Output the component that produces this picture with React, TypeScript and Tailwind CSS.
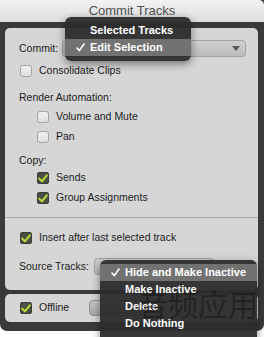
const font = "font-['Liberation_Sans',Arial,sans-serif]"

const CheckBox = ({ checked }: { checked?: boolean }) =>
	checked ? (
		<span className="flex h-[12px] w-[12px] shrink-0 items-center justify-center rounded-[3px] bg-[#4b4f44] shadow-[inset_0_0_0_1px_#3a3d35]">
			<svg width="10" height="9" viewBox="0 0 10 9" aria-hidden="true">
				<path d="M1.2 4.6 L3.9 7.3 L8.8 1.3" fill="none" stroke="#b5e03c" strokeWidth="2" strokeLinecap="round" strokeLinejoin="round" />
			</svg>
		</span>
	) : (
		<span className="h-[12px] w-[12px] shrink-0 rounded-[3px] border border-[#a3a3a3] bg-gradient-to-b from-[#f0f0f0] to-[#e0e0e0]" />
	)

const Row = ({ children, className = "" }: { children: React.ReactNode; className?: string }) => (
	<div className={`flex h-4 items-center whitespace-nowrap ${className}`}>{children}</div>
)

const Check = () => (
	<svg width="9" height="9" viewBox="0 0 9 9" aria-hidden="true">
		<path d="M1 5 L3.4 7.6 L8 1" fill="none" stroke="white" strokeWidth="1.6" strokeLinecap="round" strokeLinejoin="round" />
	</svg>
)

const MenuItem = ({ label, active }: { label: string; active?: boolean }) => (
	<div className={`relative flex h-[17px] items-center whitespace-nowrap pl-[25px] ${active ? "bg-[#727272]" : ""}`}>
		{active && (
			<span className="absolute left-[11px] top-[4px]">
				<Check />
			</span>
		)}
		<span className="text-[11px] font-bold text-white">{label}</span>
	</div>
)

export default function App() {
	return (
		<div className={`relative h-[337px] w-[264px] overflow-hidden bg-white text-[10.5px] text-[#1c1c1c] ${font}`}>
			<div className="flex h-[331px] flex-col rounded-b-[7px] bg-[#3a3a3a]">
				{/* title bar */}
				<div className="flex h-[22px] items-center justify-center rounded-tr-[5px] bg-gradient-to-b from-[#f2f2f2] to-[#dcdcdc] text-[13px] text-[#505050]">
					Commit Tracks
				</div>

				{/* main panel */}
				<div className="ml-[5px] mr-[6px] mt-[6px] flex h-[262px] flex-col rounded-[5px] bg-[#d6d6d6] pt-[12px]">
					<div className="flex h-[17px] items-center whitespace-nowrap pl-[14px]">
						<span>Commit:</span>
						<div className="relative ml-[4px] h-[17px] w-[184px] rounded-[4px] border border-[#a2a2a2] bg-gradient-to-b from-[#d0d0d0] to-[#bcbcbc]">
							<span className="absolute right-[5px] top-[5px] h-0 w-0 border-x-[4px] border-t-[5px] border-x-transparent border-t-[#5a5a5a]" />
						</div>
					</div>

					<Row className="mt-[6px] gap-[7px] pl-[15px]">
						<CheckBox />
						<span>Consolidate Clips</span>
					</Row>

					<Row className="mt-[11px] pl-[14px]">Render Automation:</Row>

					<Row className="mt-[3px] gap-[7px] pl-[32px]">
						<CheckBox />
						<span>Volume and Mute</span>
					</Row>
					<Row className="mt-[4px] gap-[7px] pl-[32px]">
						<CheckBox />
						<span>Pan</span>
					</Row>

					<Row className="mt-[8px] pl-[14px]">Copy:</Row>
					<Row className="mt-[1px] gap-[7px] pl-[32px]">
						<CheckBox checked />
						<span>Sends</span>
					</Row>
					<Row className="mt-[4px] gap-[7px] pl-[32px]">
						<CheckBox checked />
						<span>Group Assignments</span>
					</Row>

					<div className="mt-[11px] h-px bg-[#a9a9a9]" />

					<Row className="mt-[12px] gap-[7px] pl-[15px]">
						<CheckBox checked />
						<span>Insert after last selected track</span>
					</Row>

					<div className="mt-[12px] flex h-[17px] items-center whitespace-nowrap pl-[14px]">
						<span>Source Tracks:</span>
						<div className="ml-[5px] h-[17px] w-[120px] rounded-[4px] border border-[#a2a2a2] bg-gradient-to-b from-[#d0d0d0] to-[#bcbcbc]" />
					</div>
				</div>

				{/* bottom panel */}
				<div className="ml-[5px] mr-[6px] mt-[4px] flex h-[28px] items-center gap-[7px] whitespace-nowrap rounded-[5px] bg-[#d6d6d6] pl-[15px]">
					<CheckBox checked />
					<span>Offline</span>
					<div className="ml-[13px] h-[16px] w-[60px] rounded-[4px] border border-[#8f8f8f] bg-gradient-to-b from-[#c8c8c8] to-[#a8a8a8]" />
				</div>
			</div>

			{/* commit popup */}
			<div className="absolute left-[65px] top-[17px] w-[126px] rounded-[6px] bg-[#2c2c2c]/95 py-[5px] shadow-[0_3px_8px_rgba(0,0,0,0.45)]">
				<MenuItem label="Selected Tracks" />
				<MenuItem label="Edit Selection" active />
			</div>

			{/* source tracks popup */}
			<div className="absolute left-[100px] top-[260px] h-[90px] w-[157px] rounded-[6px] bg-[#2c2c2c]/95 pt-[4px] shadow-[0_3px_8px_rgba(0,0,0,0.45)]">
				<MenuItem label="Hide and Make Inactive" active />
				<MenuItem label="Make Inactive" />
				<MenuItem label="Delete" />
				<MenuItem label="Do Nothing" />
			</div>

			{/* watermark */}
			<div className="pointer-events-none absolute left-[138px] top-[288px] whitespace-nowrap text-[30px] leading-none text-black/35 font-['Noto_Sans_CJK_SC',sans-serif]">
				音频应用
			</div>
		</div>
	)
}
